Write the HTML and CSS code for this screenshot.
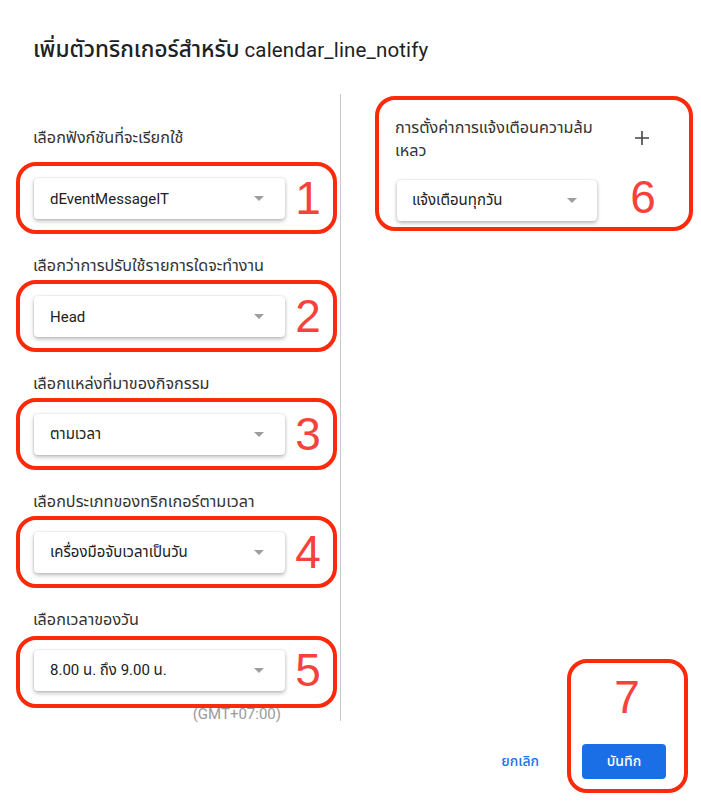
FILE: index.html
```html
<!DOCTYPE html>
<html lang="th">
<head>
<meta charset="utf-8">
<title>เพิ่มตัวทริกเกอร์</title>
<link rel="stylesheet" href="styles.css">
</head>
<body>
<div class="dialog">
  <h1 class="title"><span class="title-th">เพิ่มตัวทริกเกอร์สำหรับ</span> <span class="title-en">calendar_line_notify</span></h1>
  <div class="columns">
    <div class="col-left">
      <div class="field">
        <div class="label label-first">เลือกฟังก์ชันที่จะเรียกใช้</div>
        <div class="select-wrap">
          <div class="select"><span class="select-text">dEventMessageIT</span><span class="arrow"></span></div>
          <div class="anno"></div>
          <div class="num">1</div>
        </div>
      </div>
      <div class="field">
        <div class="label">เลือกว่าการปรับใช้รายการใดจะทำงาน</div>
        <div class="select-wrap">
          <div class="select"><span class="select-text">Head</span><span class="arrow"></span></div>
          <div class="anno"></div>
          <div class="num">2</div>
        </div>
      </div>
      <div class="field">
        <div class="label">เลือกแหล่งที่มาของกิจกรรม</div>
        <div class="select-wrap">
          <div class="select"><span class="select-text">ตามเวลา</span><span class="arrow"></span></div>
          <div class="anno"></div>
          <div class="num">3</div>
        </div>
      </div>
      <div class="field">
        <div class="label">เลือกประเภทของทริกเกอร์ตามเวลา</div>
        <div class="select-wrap">
          <div class="select"><span class="select-text">เครื่องมือจับเวลาเป็นวัน</span><span class="arrow"></span></div>
          <div class="anno"></div>
          <div class="num">4</div>
        </div>
      </div>
      <div class="field">
        <div class="label">เลือกเวลาของวัน</div>
        <div class="select-wrap">
          <div class="select"><span class="select-text">8.00 น. ถึง 9.00 น.</span><span class="arrow"></span></div>
          <div class="gmt">(GMT+07:00)</div>
          <div class="anno anno-5"></div>
          <div class="num">5</div>
        </div>
      </div>
    </div>
    <div class="col-right">
      <div class="notify-head">
        <div class="notify-label">การตั้งค่าการแจ้งเตือนความล้มเหลว</div>
        <svg class="plus" width="16" height="16" viewBox="0 0 16 16"><path d="M8 1v14M1 8h14" stroke="#444" stroke-width="1.6" fill="none"/></svg>
      </div>
      <div class="select-wrap select-wrap-sm">
        <div class="select select-sm"><span class="select-text">แจ้งเตือนทุกวัน</span><span class="arrow"></span></div>
        <div class="anno anno-6"></div>
        <div class="num num-6">6</div>
      </div>
    </div>
  </div>
  <div class="footer">
    <button class="btn-cancel">ยกเลิก</button>
    <div class="save-wrap">
      <button class="btn-save">บันทึก</button>
      <div class="anno anno-7"></div>
      <div class="num num-7">7</div>
    </div>
  </div>
</div>
</body>
</html>
```

FILE: styles.css
```css
* { box-sizing: border-box; }
html, body { margin: 0; padding: 0; background: #fff; }
body {
  font-family: Roboto, "Noto Sans Thai", "Noto Sans", "DejaVu Sans", sans-serif;
  color: #212121;
}
.dialog {
  width: 701px;
  height: 810px;
  padding: 36px 0 0 33px;
}
.title {
  margin: 0;
  font-size: 20px;
  line-height: 26px;
  font-weight: 400;
  color: #202124;
  white-space: nowrap;
}
.title-th {
  font-size: 22.5px;
  font-weight: 500;
}
.title-en {
  font-size: 20.5px;
  font-weight: 400;
  letter-spacing: 0.15px;
}
.columns {
  display: flex;
  margin-top: 31px;
}
.col-left {
  width: 308px;
  height: 627px;
  border-right: 1px solid #c9c9c9;
  padding-top: 34px;
}
.field + .field { margin-top: 37px; }
.label {
  font-size: 16.2px;
  line-height: 20px;
  color: #333;
  margin-bottom: 20px;
}
.label-first { margin-bottom: 30px; }
.select-wrap {
  position: relative;
  width: 251px;
  margin-left: 1px;
}
.select {
  height: 41px;
  background: #fff;
  border-radius: 4px;
  box-shadow: 0 2px 4px rgba(0,0,0,0.28), 0 0 2px rgba(0,0,0,0.12);
  display: flex;
  align-items: center;
  justify-content: space-between;
  padding: 0 21px 0 16px;
}
.select-text {
  font-size: 15px;
  color: #212121;
}
.arrow {
  width: 0;
  height: 0;
  border-left: 5.5px solid transparent;
  border-right: 5.5px solid transparent;
  border-top: 5.5px solid #9e9e9e;
}
.gmt {
  text-align: right;
  font-size: 15px;
  line-height: 20px;
  color: #9a9a9a;
  margin-top: 13px;
  padding-right: 4px;
}
.anno {
  position: absolute;
  left: -18px;
  top: -16px;
  right: -52px;
  height: 72px;
  border: 4px solid #fb2a0a;
  border-radius: 20px;
  pointer-events: none;
}
.anno-5 { top: -14px; }
.num {
  position: absolute;
  left: 258px;
  top: 0;
  width: 32px;
  height: 41px;
  font-family: "Liberation Sans", Arial, sans-serif;
  font-size: 46px;
  line-height: 41px;
  text-align: center;
  color: #f5433b;
}
.col-right {
  flex: 1;
  padding: 22px 0 0 56px;
}
.notify-head {
  display: flex;
  align-items: center;
}
.notify-label {
  width: 225px;
  font-size: 16.2px;
  line-height: 23px;
  color: #333;
  margin-left: -2px;
}
.plus { margin-left: 14px; margin-top: -2px; }
.select-wrap-sm {
  width: 200px;
  margin: 18px 0 0 0;
}
.select-sm { padding-right: 20px; padding-left: 15px; }
.anno-6 {
  left: -22px;
  top: -84px;
  right: -96px;
  height: 135px;
}
.num-6 { left: 230px; top: -3px; }
.footer {
  display: flex;
  justify-content: flex-end;
  align-items: center;
  padding-right: 35px;
  margin-top: 23px;
}
.btn-cancel {
  background: none;
  border: none;
  padding: 0;
  font-family: inherit;
  font-size: 14px;
  font-weight: 500;
  color: #1a73e8;
  margin-right: 43px;
}
.save-wrap { position: relative; }
.btn-save {
  width: 84px;
  height: 35px;
  border: none;
  border-radius: 4px;
  background: #1a6fe6;
  color: #fff;
  font-family: inherit;
  font-size: 14px;
  font-weight: 500;
}
.anno-7 {
  left: -15px;
  top: -85px;
  right: -22px;
  height: 134px;
}
.num-7 { left: 29px; top: -67px; }
```
